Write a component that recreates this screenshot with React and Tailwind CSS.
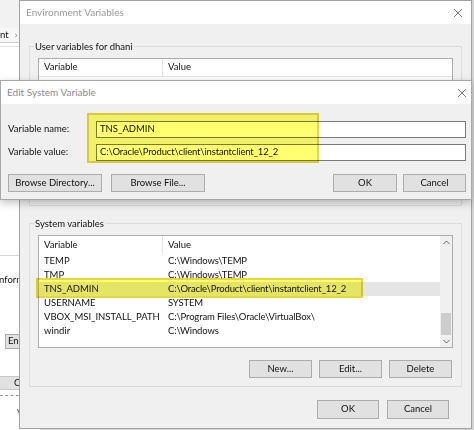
const CloseX = ({ className = "" }) => (
  <svg width="10" height="10" viewBox="0 0 10 10" className={className}>
    <path d="M1 1 L9 9 M9 1 L1 9" stroke="#7d7d7d" strokeWidth="1" fill="none" />
  </svg>
);

const Btn = ({ children, className = "" }) => (
  <div className={`flex items-center justify-center bg-[#e1e1e1] border border-[#adadad] text-[#111] ${className}`}>
    {children}
  </div>
);

const SYS_VARS = [
  { name: "TEMP", value: "C:\\Windows\\TEMP" },
  { name: "TMP", value: "C:\\Windows\\TEMP" },
  { name: "TNS_ADMIN", value: "C:\\Oracle\\Product\\client\\instantclient_12_2", selected: true },
  { name: "USERNAME", value: "SYSTEM" },
  { name: "VBOX_MSI_INSTALL_PATH", value: "C:\\Program Files\\Oracle\\VirtualBox\\" },
  { name: "windir", value: "C:\\Windows" },
];

function BackWindow() {
  return (
    <div className="absolute left-0 top-0 w-[40px] h-full bg-white flex flex-col">
      <div className="h-[28px] bg-[#f2f2f2]" />
      <div className="h-[15px] flex items-center gap-[6px] bg-[#f7f7f7] border-b border-[#cfcfcf] whitespace-nowrap">
        <span>nt</span>
        <span className="text-[#777]">›</span>
      </div>
      <div className="h-[4px] border-b border-[#e2e2e2]" />
      <div className="h-[208px]" />
      <div className="h-[1px] bg-[#d6d6d6]" />
      <div className="h-[30px] flex items-end whitespace-nowrap">
        <span className="-ml-[1px] leading-[12px]">nform</span>
      </div>
      <div className="h-[48px]" />
      <Btn className="ml-[5px] w-[30px] h-[15px] justify-start pl-[2px]">En</Btn>
      <div className="h-[27px]" />
      <div className="h-[14px] bg-[#e1e1e1] border-y border-[#c8c8c8] flex items-center pl-[14px]">C</div>
      <div className="h-[6px] border-b border-dashed border-[#9a9a9a]" />
      <div className="h-[10px]" />
      <div className="pl-[17px] text-[#555]">V</div>
    </div>
  );
}

function UserGroup() {
  return (
    <fieldset className="mt-[16px] h-[166px] border border-[#dcdcdc] px-[8px] pb-0 pt-0 min-w-0">
      <legend className="-ml-[4px] px-[1px] leading-[13px]">User variables for dhani</legend>
      <div className="mt-[5px] h-[130px] bg-white border border-[#adadad] flex flex-col">
        <div className="h-[18px] flex border-b border-[#e5e5e5]">
          <div className="w-[124px] pl-[5px] flex items-center border-r border-[#e5e5e5]">Variable</div>
          <div className="pl-[5px] flex items-center">Value</div>
        </div>
      </div>
    </fieldset>
  );
}

function SystemGroup() {
  return (
    <fieldset className="mt-[11px] h-[170px] border border-[#dcdcdc] px-[8px] pb-0 pt-0 min-w-0">
      <legend className="-ml-[4px] px-[1px] leading-[13px]">System variables</legend>
      <div className="mt-[5px] h-[113px] bg-white border border-[#adadad] flex">
        <div className="flex-1 flex flex-col">
          <div className="h-[18px] flex">
            <div className="w-[124px] pl-[5px] flex items-center border-r border-[#e5e5e5]">Variable</div>
            <div className="pl-[5px] flex items-center">Value</div>
          </div>
          {SYS_VARS.map((v) => (
            <div key={v.name} className={`h-[14px] flex whitespace-nowrap ${v.selected ? "bg-[#e5e5e5]" : ""}`}>
              <div className="w-[124px] pl-[5px] flex items-center">{v.name}</div>
              <div className="pl-[5px] flex items-center tracking-[-0.15px]">{v.value}</div>
            </div>
          ))}
        </div>
        <div className="w-[12px] bg-[#f0f0f0] flex flex-col">
          <div className="h-[13px] flex items-center justify-center">
            <svg width="7" height="5" viewBox="0 0 7 5"><path d="M0.5 4 L3.5 1 L6.5 4" stroke="#606060" fill="none" /></svg>
          </div>
          <div className="flex-1" />
          <div className="h-[22px] mx-[1px] bg-[#cdcdcd]" />
          <div className="h-[12px] flex items-center justify-center">
            <svg width="7" height="5" viewBox="0 0 7 5"><path d="M0.5 1 L3.5 4 L6.5 1" stroke="#606060" fill="none" /></svg>
          </div>
        </div>
      </div>
      <div className="mt-[12px] flex justify-end gap-[7px] pr-[1px]">
        <Btn className="w-[63px] h-[18px]">New...</Btn>
        <Btn className="w-[63px] h-[18px]">Edit...</Btn>
        <Btn className="w-[63px] h-[18px]">Delete</Btn>
      </div>
    </fieldset>
  );
}

function EnvWindow() {
  return (
    <div className="absolute left-[19px] top-0 w-[453px] h-[429px] border border-[#a3a3a3] bg-[#f0f0f0] flex flex-col">
      <div className="h-[23px] bg-white flex items-center justify-between pl-[6px] pr-[8px]">
        <span className="text-[#9a9a9a] text-[10px]">Environment Variables</span>
        <CloseX />
      </div>
      <div className="px-[9px] flex flex-col">
        <UserGroup />
        <SystemGroup />
        <div className="mt-[13px] flex justify-end gap-[8px] pr-[13px]">
          <Btn className="w-[62px] h-[19px]">OK</Btn>
          <Btn className="w-[62px] h-[19px]">Cancel</Btn>
        </div>
      </div>
      {/* annotation box around TNS_ADMIN row */}
      <div className="absolute left-[16px] top-[277px] w-[327px] h-[20px] bg-[#ffff70] mix-blend-multiply border-2 border-[#e6d83a]" />
    </div>
  );
}

function EditDialog() {
  return (
    <div className="absolute left-0 top-[80px] w-[472px] border border-[#a8a8a8] bg-[#f0f0f0] shadow-[0_3px_8px_rgba(0,0,0,0.25)] flex flex-col isolate">
      <div className="h-[23px] bg-white flex items-center justify-between pl-[6px] pr-[4px]">
        <span className="text-[#8c8c8c] text-[10px]">Edit System Variable</span>
        <CloseX />
      </div>
      <div className="pl-[7px] pr-[5px] pt-[17px] pb-[7px] flex flex-col">
        <div className="flex items-center h-[17px]">
          <div className="w-[88px]">Variable name:</div>
          <div className="flex-1 h-full bg-white border border-[#7a7a7a] pl-[3px] flex items-center">TNS_ADMIN</div>
        </div>
        <div className="mt-[6px] flex items-center h-[17px]">
          <div className="w-[88px]">Variable value:</div>
          <div className="flex-1 h-full bg-white border border-[#7a7a7a] pl-[3px] flex items-center tracking-[-0.15px]">C:\Oracle\Product\client\instantclient_12_2</div>
        </div>
        <div className="mt-[13px] flex items-center h-[18px]">
          <Btn className="w-[94px] h-full">Browse Directory...</Btn>
          <Btn className="ml-[9px] w-[94px] h-full">Browse File...</Btn>
          <Btn className="ml-auto w-[64px] h-full">OK</Btn>
          <Btn className="ml-[6px] w-[63px] h-full">Cancel</Btn>
        </div>
      </div>
      {/* annotation box around the two fields */}
      <div className="absolute left-[86px] top-[32px] w-[232px] h-[50px] bg-[#ffff70] mix-blend-multiply border-2 border-[#e6d83a]" />
    </div>
  );
}

export default function App() {
  return (
    <div className="relative w-[474px] h-[430px] overflow-hidden bg-[#d4d4d4] font-['Lato',sans-serif] text-[9.5px] text-[#111]">
      <BackWindow />
      <EnvWindow />
      <EditDialog />
    </div>
  );
}
